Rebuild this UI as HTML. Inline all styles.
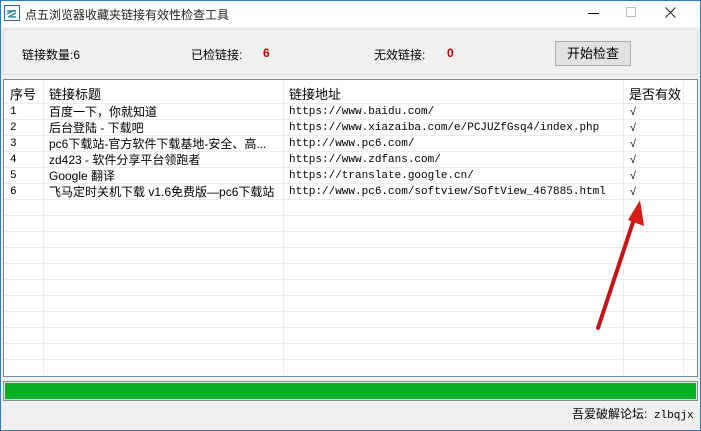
<!DOCTYPE html><html><head><meta charset="utf-8"><style>
*{margin:0;padding:0;box-sizing:border-box}
body{width:701px;height:431px;background:#f0f0f0;position:relative;overflow:hidden;font-family:"Liberation Sans","Noto Sans CJK SC",sans-serif;font-size:12px;color:#000}
.a{position:absolute;white-space:nowrap}
.mono{font-family:"Liberation Mono","Noto Sans CJK SC",monospace;font-size:11px}
</style></head><body>
<div class="a" style="left:0;top:0;width:701px;height:431px;border:1px solid #2b79c8"></div>
<div class="a" style="left:1px;top:1px;width:699px;height:26px;background:#fff"></div>
<svg class="a" style="left:4px;top:5px" width="16" height="16"><rect x="0.5" y="0.5" width="15" height="15" fill="#fff" stroke="#2a6aa8"/><path d="M3 6h9M3 9l8-4M4 12l8-4M6 12h6" stroke="#2a8a9a" stroke-width="1.5" fill="none"/></svg>
<div class="a" style="left:25px;top:6px;font-size:12px;color:#222">点五浏览器收藏夹链接有效性检查工具</div>
<div class="a" style="left:588px;top:13px;width:11px;height:1px;background:#000"></div>
<div class="a" style="left:626px;top:7px;width:10px;height:10px;border:1px solid #bbb"></div>
<svg class="a" style="left:665px;top:7px" width="11" height="11"><path d="M0.5 0.5L10.5 10.5M10.5 0.5L0.5 10.5" stroke="#222" stroke-width="1"/></svg>
<div class="a" style="left:3px;top:29px;width:695px;height:46px;border:1px solid #dcdcdc"></div>
<div class="a" style="left:22px;top:46px">链接数量:6</div>
<div class="a" style="left:191px;top:46px">已检链接:</div>
<div class="a" style="left:263px;top:46px;color:#c00000;font-weight:bold">6</div>
<div class="a" style="left:374px;top:46px">无效链接:</div>
<div class="a" style="left:447px;top:46px;color:#c00000;font-weight:bold">0</div>
<div class="a" style="left:555px;top:41px;width:76px;height:25px;background:#e1e1e1;border:1px solid #adadad;text-align:center;line-height:23px;font-size:13px">开始检查</div>
<div class="a" style="left:3px;top:79px;width:695px;height:298px;background:#fff;border:1px solid #828790"></div>
<svg class="a" style="left:4px;top:80px" width="693" height="296">
<g stroke="#ececec" stroke-width="1">
<line x1="0" y1="23.5" x2="693" y2="23.5"/>
<line x1="0" y1="39.5" x2="693" y2="39.5"/><line x1="0" y1="55.5" x2="693" y2="55.5"/><line x1="0" y1="71.5" x2="693" y2="71.5"/><line x1="0" y1="87.5" x2="693" y2="87.5"/><line x1="0" y1="103.5" x2="693" y2="103.5"/><line x1="0" y1="119.5" x2="693" y2="119.5"/><line x1="0" y1="135.5" x2="693" y2="135.5"/><line x1="0" y1="151.5" x2="693" y2="151.5"/><line x1="0" y1="167.5" x2="693" y2="167.5"/><line x1="0" y1="183.5" x2="693" y2="183.5"/><line x1="0" y1="199.5" x2="693" y2="199.5"/><line x1="0" y1="215.5" x2="693" y2="215.5"/><line x1="0" y1="231.5" x2="693" y2="231.5"/><line x1="0" y1="247.5" x2="693" y2="247.5"/><line x1="0" y1="263.5" x2="693" y2="263.5"/><line x1="0" y1="279.5" x2="693" y2="279.5"/>
<line x1="39.5" y1="0" x2="39.5" y2="296"/><line x1="279.5" y1="0" x2="279.5" y2="296"/><line x1="619.5" y1="0" x2="619.5" y2="296"/><line x1="679.5" y1="0" x2="679.5" y2="296"/>
</g>
<path d="M594 248 L633 130" stroke="#c81414" stroke-width="4" fill="none" stroke-linecap="round"/>
<path d="M636 120 L624 140 L640 146 Z" fill="#d81a1a"/>
</svg>
<div class="a" style="left:10px;top:84px;font-size:13px">序号</div>
<div class="a" style="left:49px;top:84px;font-size:13px">链接标题</div>
<div class="a" style="left:289px;top:84px;font-size:13px">链接地址</div>
<div class="a" style="left:629px;top:84px;font-size:13px">是否有效</div>
<div class="a mono" style="left:10px;top:104px;line-height:16px">1<br>2<br>3<br>4<br>5<br>6</div>
<div class="a" style="left:49px;top:104px;line-height:16px;font-size:12px">百度一下，你就知道<br>后台登陆 - 下载吧<br>pc6下载站-官方软件下载基地-安全、高...<br>zd423 - 软件分享平台领跑者<br>Google 翻译<br>飞马定时关机下载 v1.6免费版—pc6下载站</div>
<div class="a mono" style="left:289px;top:104px;line-height:16px">https://www.baidu.com/<br>https://www.xiazaiba.com/e/PCJUZfGsq4/index.php<br>http://www.pc6.com/<br>https://www.zdfans.com/<br>https://translate.google.cn/<br>http://www.pc6.com/softview/SoftView_467885.html</div>
<div class="a" style="left:630px;top:104px;line-height:16px;font-size:11px">√<br>√<br>√<br>√<br>√<br>√</div>
<div class="a" style="left:3px;top:381px;width:695px;height:20px;border:1px solid #8a8a8a;background:#e6e6e6"></div>
<div class="a" style="left:5px;top:383px;width:691px;height:16px;background:#06b025"></div>
<div class="a" style="left:572px;top:405px;font-size:12px">吾爱破解论坛:<span class="mono" style="font-size:11px"> zlbqjx</span></div>
</body></html>
